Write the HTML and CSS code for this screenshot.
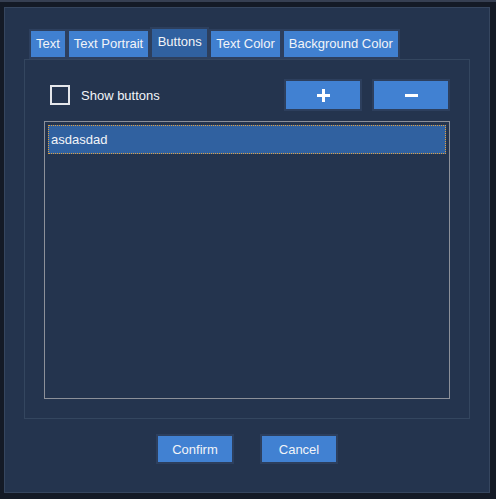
FILE: index.html
```html
<!DOCTYPE html>
<html>
<head>
<meta charset="utf-8">
<link rel="stylesheet" href="styles.css">
</head>
<body>
<div class="window">
  <div class="tabs">
    <div class="tab">Text</div>
    <div class="tab">Text Portrait</div>
    <div class="tab active">Buttons</div>
    <div class="tab">Text Color</div>
    <div class="tab">Background Color</div>
  </div>
  <div class="panel">
    <div class="toolbar">
      <label class="check"><span class="box"></span><span class="check-label">Show buttons</span></label>
      <div class="tool-buttons">
        <button class="btn icon-btn" aria-label="Add">
          <svg width="13" height="13" viewBox="0 0 13 13"><rect x="5" y="0" width="3" height="13" fill="#ffffff"/><rect x="0" y="5" width="13" height="3" fill="#ffffff"/></svg>
        </button>
        <button class="btn icon-btn" aria-label="Remove">
          <svg width="13" height="13" viewBox="0 0 13 13"><rect x="0" y="5" width="13" height="3" fill="#ffffff"/></svg>
        </button>
      </div>
    </div>
    <div class="list">
      <div class="item selected">asdasdad</div>
    </div>
  </div>
  <div class="actions">
    <button class="btn action">Confirm</button>
    <button class="btn action">Cancel</button>
  </div>
</div>
</body>
</html>
```
FILE: styles.css
```css
html, body {
  margin: 0;
  padding: 0;
}
body {
  width: 496px;
  height: 499px;
  box-sizing: border-box;
  background: #141a26;
  border-top: 2px solid #363f52;
  padding: 5px 0 0 4px;
  font-family: "Liberation Sans", Arial, sans-serif;
  font-size: 13px;
  color: #f2f4f8;
  overflow: hidden;
}
.window {
  width: 486px;
  height: 486px;
  box-sizing: border-box;
  border: 1px solid #36465f;
  background: #24344e;
  padding: 19px 19px 0 19px;
  display: flex;
  flex-direction: column;
}
.tabs {
  display: flex;
  align-items: flex-end;
  height: 32px;
  margin-left: 5px;
}
.tab {
  background: #4080d0;
  border: 2px solid #2d3f5d;
  height: 26px;
  line-height: 26px;
  padding: 0 5px;
  white-space: nowrap;
}
.tab.active {
  background: #3061a0;
  height: 26px;
  padding: 0 5.5px 2px 5.5px;
}
.panel {
  border: 1px solid #34465f;
  height: 360px;
  box-sizing: border-box;
  padding: 19px 19px 19px 19px;
  display: flex;
  flex-direction: column;
  gap: 10px;
}
.toolbar {
  display: flex;
  align-items: center;
  justify-content: space-between;
  height: 32px;
}
.check {
  display: flex;
  align-items: center;
  margin-left: 6px;
}
.box {
  width: 20px;
  height: 20px;
  box-sizing: border-box;
  border: 2px solid #e4e6ea;
  margin-right: 11px;
}
.tool-buttons {
  display: flex;
  gap: 10px;
}
.btn {
  background: #4181d2;
  border: 2px solid #2d3f5d;
  color: #f2f4f8;
  font-family: "Liberation Sans", Arial, sans-serif;
  font-size: 13px;
  padding: 0;
  margin: 0;
  display: flex;
  align-items: center;
  justify-content: center;
}
.icon-btn {
  width: 78px;
  height: 32px;
}
.list {
  flex: 1;
  border: 1px solid #8c9099;
  padding: 3px;
}
.item {
  height: 29px;
  box-sizing: border-box;
  line-height: 28px;
  padding-left: 2px;
}
.item.selected {
  background: #3061a0;
  border: 1px dotted #e0a040;
}
.actions {
  display: flex;
  justify-content: center;
  gap: 26px;
  margin-top: 15px;
}
.action {
  width: 78px;
  height: 30px;
}
```
